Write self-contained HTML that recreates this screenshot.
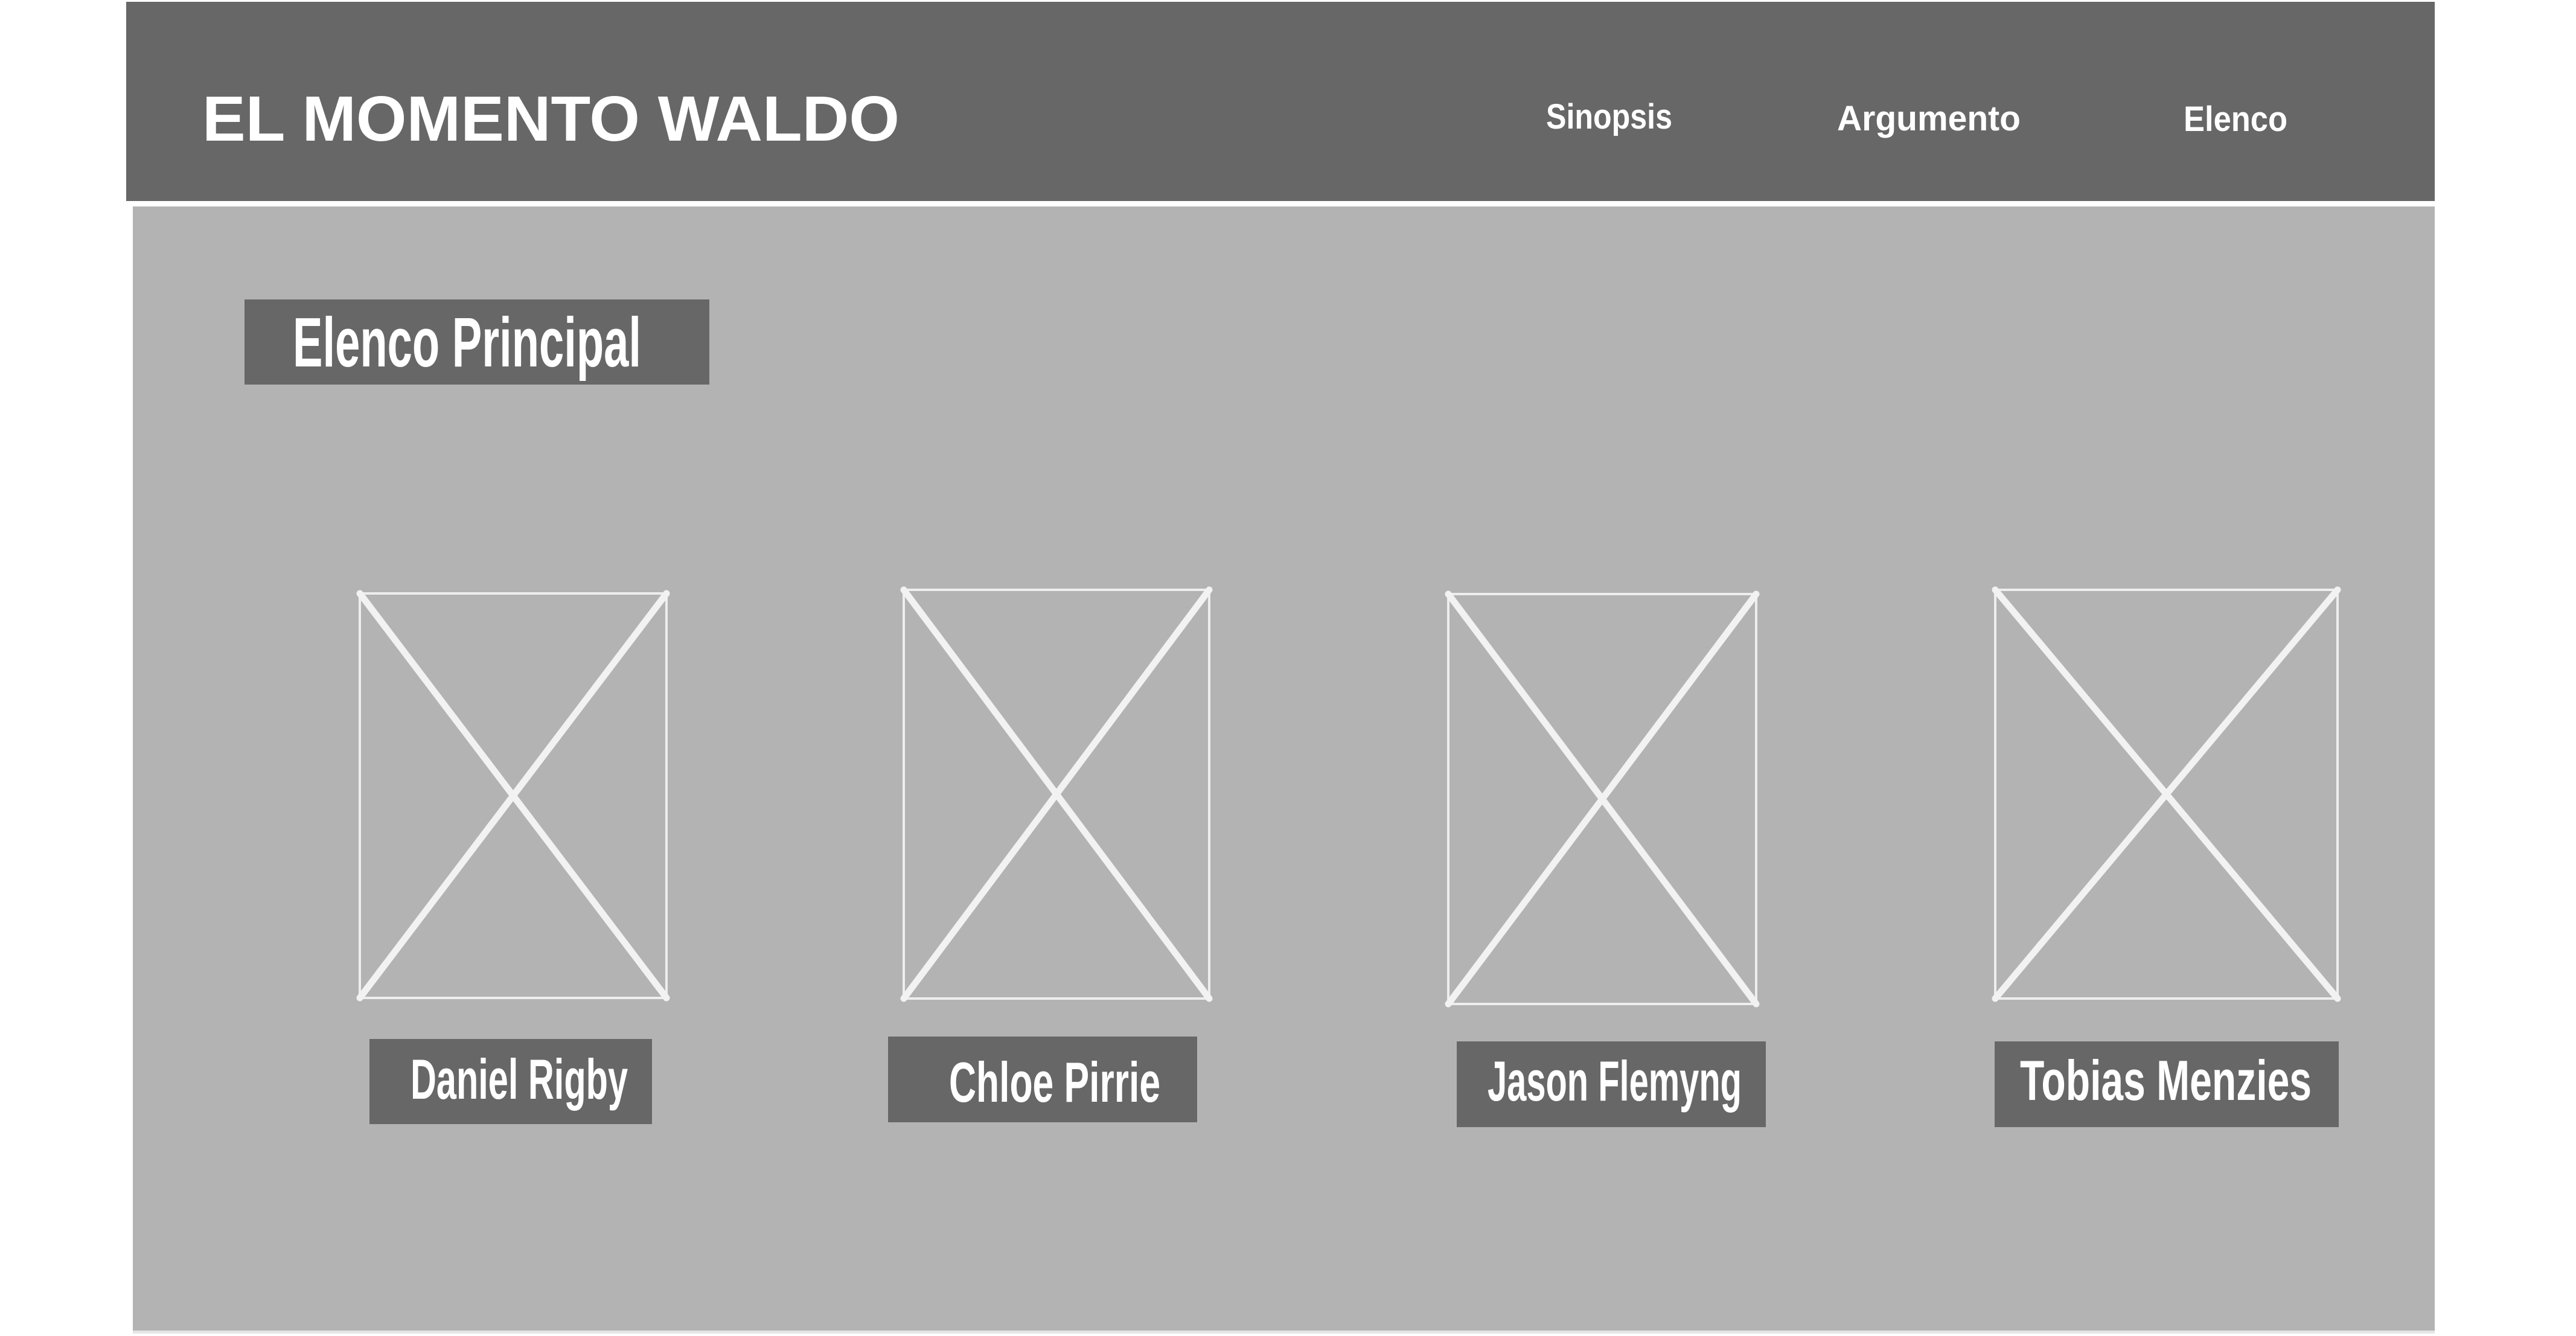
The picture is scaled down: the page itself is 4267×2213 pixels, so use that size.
<!DOCTYPE html>
<html><head><meta charset="utf-8"><style>
html,body{margin:0;padding:0;background:#fff;width:4267px;height:2213px;overflow:hidden}
svg{display:block}
text{font-family:"Liberation Sans",sans-serif;font-weight:bold;fill:#fff}
</style></head><body>
<svg width="4267" height="2213" viewBox="0 0 4267 2213" xmlns="http://www.w3.org/2000/svg">
<rect x="0" y="0" width="4267" height="2213" fill="#fff"/>
<rect x="209" y="3" width="3824" height="330" fill="#676767"/>
<rect x="220" y="342" width="3813" height="1862" fill="#b3b3b3"/>
<rect x="220" y="2204" width="3813" height="5" fill="#e6e6e6"/>
<text x="335" y="233" font-size="106" textLength="1155" lengthAdjust="spacingAndGlyphs">EL MOMENTO WALDO</text>
<text x="2561" y="213" font-size="58" textLength="209" lengthAdjust="spacingAndGlyphs">Sinopsis</text>
<text x="3043" y="216" font-size="58" textLength="304" lengthAdjust="spacingAndGlyphs">Argumento</text>
<text x="3617" y="217" font-size="58" textLength="172" lengthAdjust="spacingAndGlyphs">Elenco</text>
<rect x="405" y="496" width="770" height="141" fill="#676767"/>
<text x="485" y="607" font-size="116" textLength="577" lengthAdjust="spacingAndGlyphs">Elenco Principal</text>
<g fill="none" stroke="#eeeeee" stroke-width="4">
<rect x="596" y="983" width="508" height="670"/>
<rect x="1497" y="977" width="506" height="677"/>
<rect x="2399" y="984" width="510" height="679"/>
<rect x="3305" y="977" width="567" height="677"/>
</g>
<g stroke="#f2f2f2" stroke-width="11" stroke-linecap="round">
<line x1="596" y1="983" x2="1104" y2="1653"/><line x1="1104" y1="983" x2="596" y2="1653"/>
<line x1="1497" y1="977" x2="2003" y2="1654"/><line x1="2003" y1="977" x2="1497" y2="1654"/>
<line x1="2399" y1="984" x2="2909" y2="1663"/><line x1="2909" y1="984" x2="2399" y2="1663"/>
<line x1="3305" y1="977" x2="3872" y2="1654"/><line x1="3872" y1="977" x2="3305" y2="1654"/>
</g>
<rect x="612" y="1721" width="468" height="141" fill="#676767"/>
<text x="680" y="1820" font-size="94" textLength="360" lengthAdjust="spacingAndGlyphs">Daniel Rigby</text>
<rect x="1471" y="1717" width="512" height="142" fill="#676767"/>
<text x="1572" y="1825" font-size="94" textLength="350" lengthAdjust="spacingAndGlyphs">Chloe Pirrie</text>
<rect x="2413" y="1725" width="512" height="142" fill="#676767"/>
<text x="2464" y="1823" font-size="94" textLength="421" lengthAdjust="spacingAndGlyphs">Jason Flemyng</text>
<rect x="3304" y="1725" width="570" height="142" fill="#676767"/>
<text x="3346" y="1822" font-size="94" textLength="483" lengthAdjust="spacingAndGlyphs">Tobias Menzies</text>
</svg>
</body></html>
